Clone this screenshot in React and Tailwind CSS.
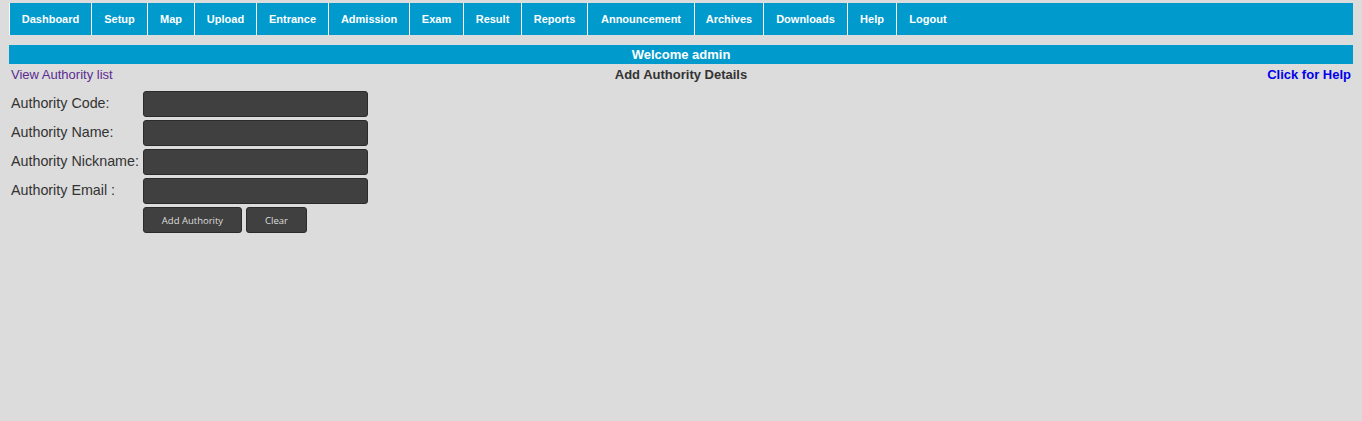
const navItems = [
  { label: "Dashboard", w: "w-[82px]" },
  { label: "Setup", w: "w-[56px]" },
  { label: "Map", w: "w-[47px]" },
  { label: "Upload", w: "w-[62px]" },
  { label: "Entrance", w: "w-[72px]" },
  { label: "Admission", w: "w-[81px]" },
  { label: "Exam", w: "w-[54px]" },
  { label: "Result", w: "w-[58px]" },
  { label: "Reports", w: "w-[66px]" },
  { label: "Announcement", w: "w-[107px]" },
  { label: "Archives", w: "w-[69px]" },
  { label: "Downloads", w: "w-[84px]" },
  { label: "Help", w: "w-[49px]" },
  { label: "Logout", w: "w-[62px]" },
];

const fields = [
  "Authority Code:",
  "Authority Name:",
  "Authority Nickname:",
  "Authority Email :",
];

export default function App() {
  return (
    <main
      className="min-h-screen w-full bg-[#dcdcdc] pl-[9px] pt-[3px]"
      style={{ fontFamily: '"Liberation Sans", Arial, sans-serif' }}
    >
      <div className="w-[1344px]">
        <ul className="flex h-[32px] bg-[#009acd] border-l border-white">
          {navItems.map((item) => (
            <li
              key={item.label}
              className={`${item.w} flex items-center justify-center border-r border-white text-[11px] font-bold text-white last:border-r-0`}
            >
              {item.label}
            </li>
          ))}
        </ul>

        <div className="mt-[10px] h-[19px] bg-[#009acd] flex items-center justify-center text-[13px] font-bold text-white">
          Welcome admin
        </div>

        <div className="h-[21px] pt-[1px] px-[2px] grid grid-cols-3 items-center text-[13px]">
          <a className="text-[#5b2c91] cursor-pointer">View Authority list</a>
          <p className="text-center font-bold text-[#333333]">Add Authority Details</p>
          <a className="text-right font-bold text-[#0000ee] cursor-pointer">Click for Help</a>
        </div>

        <form className="mt-[6px] pl-[2px] grid grid-cols-[132px_225px] gap-y-[3px]">
          {fields.map((label) => (
            <div key={label} className="contents">
              <label className="h-[26px] flex items-center text-[14.3px] text-[#333333] whitespace-nowrap">
                {label}
              </label>
              <input
                type="text"
                className="h-[26px] w-[225px] rounded-[3px] border border-[#2b2b2b] bg-[#404040] outline-none"
              />
            </div>
          ))}
          <div />
          <div className="flex gap-[4px]">
            <button
              type="button"
              className="h-[26px] w-[99px] pt-[2px] rounded-[3px] border border-[#2b2b2b] bg-[#404040] text-[9.5px] text-[#dddddd]"
              style={{ fontFamily: '"Open Sans", sans-serif' }}
            >
              Add Authority
            </button>
            <button
              type="button"
              className="h-[26px] w-[61px] pt-[2px] rounded-[3px] border border-[#2b2b2b] bg-[#404040] text-[9.5px] text-[#dddddd]"
              style={{ fontFamily: '"Open Sans", sans-serif' }}
            >
              Clear
            </button>
          </div>
        </form>
      </div>
    </main>
  );
}
